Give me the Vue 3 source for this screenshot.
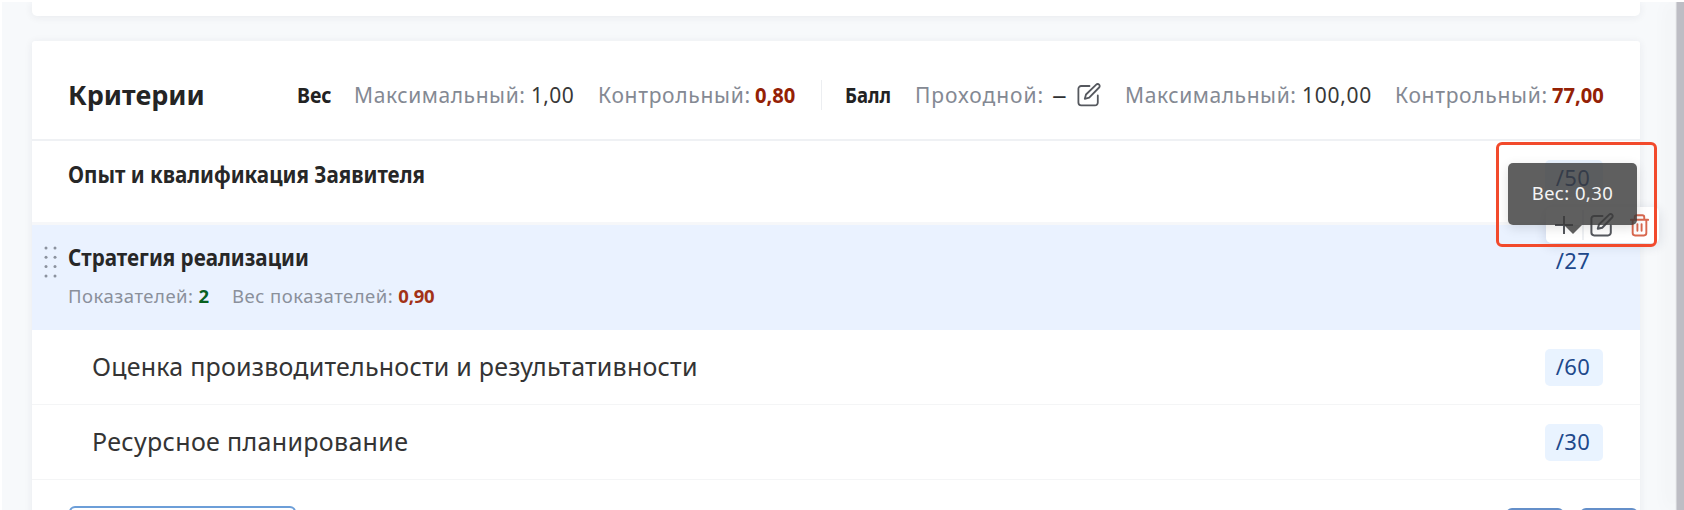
<script setup>
const items = [
  { title: 'Оценка производительности и результативности', score: '/60', cls: 'long' },
  { title: 'Ресурсное планирование', score: '/30', cls: 'short' },
]
</script>

<template>
  <div class="page">
    <main class="content">
      <section class="card previous"></section>
      <section class="card criteria">
        <header class="head">
          <h1>Критерии</h1>
          <b class="group weight">Вес</b>
          <span class="stat"><span class="label max">Максимальный:</span><span class="num">1,00</span></span>
          <span class="stat"><span class="label control">Контрольный:</span><b class="bad">0,80</b></span>
          <i class="divider"></i>
          <b class="group score-title">Балл</b>
          <span class="stat">
            <span class="label pass">Проходной:</span><i class="dash">–</i>
            <svg class="edit" viewBox="0 0 24 24"><path d="M12.500 3H4.200A2.800 2.800 0 0 0 1.400 5.800V19.600a2.800 2.800 0 0 0 2.800 2.800H18a2.800 2.800 0 0 0 2.800-2.800V12.500M9 11.500 19.200 1.600a2 2 0 0 1 2.900 2.900L12.200 14.700l-4.400 1.100z" /></svg>
          </span>
          <span class="stat"><span class="label max">Максимальный:</span><span class="num hundred">100,00</span></span>
          <span class="stat"><span class="label control">Контрольный:</span><b class="bad">77,00</b></span>
        </header>

        <div class="row first">
          <h2>Опыт и квалификация Заявителя</h2>
          <span class="pill">/50</span>
        </div>

        <div class="row selected">
          <svg class="grip" viewBox="0 0 13 33">
            <template v-for="y in 4" :key="y">
              <circle cx="2" :cy="y * 9.300 - 7.300" r="1.500" />
              <circle cx="11" :cy="y * 9.300 - 7.300" r="1.500" />
            </template>
          </svg>
          <div class="body">
            <h2>Стратегия реализации</h2>
            <p class="meta">
              <span>Показателей:</span><b class="good">2</b>
              <span class="next">Вес показателей:</span><b class="warn">0,90</b>
            </p>
          </div>
          <span class="pill">/27</span>
        </div>

        <div v-for="item in items" :key="item.title" class="row item">
          <h3 :class="item.cls">{{ item.title }}</h3>
          <span class="pill">{{ item.score }}</span>
        </div>

        <footer class="foot">
          <i class="btn wide"></i>
          <i class="btn small"></i>
          <i class="btn small"></i>
        </footer>
      </section>
    </main>
    <div class="scrollbar"></div>

    <div class="tools">
      <svg class="plus" viewBox="0 0 18 18"><path d="M9 0v18M0 9h18" /></svg>
      <i></i>
      <svg class="edit" viewBox="0 0 24 24"><path d="M12.500 3H4.200A2.800 2.800 0 0 0 1.400 5.800V19.600a2.800 2.800 0 0 0 2.800 2.800H18a2.800 2.800 0 0 0 2.800-2.800V12.500M9 11.500 19.200 1.600a2 2 0 0 1 2.900 2.900L12.200 14.700l-4.400 1.100z" /></svg>
      <svg class="trash" viewBox="0 0 20 24"><path d="M.8 6h18.400M5 6V3.200C5 2 5.800 1.200 7 1.200h6c1.200 0 2 .8 2 2V6M2.800 6v14c0 1.500 1 2.500 2.500 2.500h9.400c1.500 0 2.500-1 2.500-2.500V6M7.800 10.500v7M12.200 10.500v7" /></svg>
    </div>
    <div class="tooltip">Вес: 0,30</div>
    <div class="frame"></div>
  </div>
</template>

<style>
html, body { overflow: hidden; }
</style>

<style scoped>
* { box-sizing: border-box; }
.page {
  position: relative;
  display: flex;
  width: 1684px;
  height: 510px;
  overflow: hidden;
  background: #f7f9fb;
  border-top: 2px solid #fff;
  border-left: 2px solid #fff;
  font-family: "Noto Sans", "Open Sans", sans-serif;
  color: #303133;
}
h1, h2, h3, p { margin: 0; }
i { font-style: normal; }
.content { width: 1638px; height: 510px; flex: none; padding-left: 30px; margin-right: 37px; }
.card { width: 1608px; background: #fff; box-shadow: 0 1px 8px rgba(35, 45, 65, .075); }
.previous { height: 14px; border-radius: 0 0 5px 5px; }
.criteria { height: 500px; margin-top: 25px; border-radius: 3px; }
.scrollbar { width: 7px; flex: none; background: #bdbdc4; box-shadow: -8px 0 18px rgba(40, 45, 55, .05), -1px 0 1px #d5d6da; }

.head {
  height: 100px;
  padding: 9px 0 0 36px;
  display: grid;
  grid-template-columns: 229px 57px 244px 223px 24px 70px 210px 270px 1fr;
  align-items: center;
  border-bottom: 2px solid #eff1f4;
  font-size: 21px;
  line-height: 28px;
  white-space: nowrap;
}
.head h1 { font-size: 27px; line-height: 36px; color: #242424; font-weight: 700; letter-spacing: 0; }
.group { color: #222; justify-self: start; transform-origin: left; }
.weight { transform: scaleX(.93); }
.score-title { transform: scaleX(.88); }
.stat { display: flex; align-items: center; }
.label { color: #848993; flex: none; }
.max { width: 177px; letter-spacing: .58px; }
.control { width: 157px; letter-spacing: .7px; }
.pass { width: 137px; letter-spacing: .95px; }
.num { letter-spacing: .35px; color: #383838; }
.hundred { letter-spacing: .7px; }
.bad { color: #942105; transform: scaleX(.96); transform-origin: left; }
.divider { width: 1px; height: 30px; background: #eceef1; }
.dash { width: 25px; transform-origin: left; transform: scaleX(1.400); }
svg { fill: none; stroke: #55585e; stroke-width: 1.800; stroke-linecap: round; stroke-linejoin: round; flex: none; }
.edit { width: 24px; height: 24px; }

.row { display: flex; align-items: flex-start; justify-content: space-between; padding-right: 37px; }
h2 { width: max-content; font-size: 23px; line-height: 30px; font-weight: 700; color: #272727; white-space: nowrap; transform: scaleX(.896); transform-origin: left; }
.first { height: 84px; padding-top: 19px; padding-left: 36px; border-bottom: 3px solid #f6f7f9; }
.first h2 { margin-top: -1px; }
.pill {
  width: 58px;
  height: 37px;
  flex: none;
  border-radius: 5px;
  background: #e9f3ff;
  color: #20488b;
  font-size: 22px;
  line-height: 35px;
  letter-spacing: .4px;
  text-align: center;
  padding-right: 2px;
}
.selected { height: 105px; padding-top: 17px; background: #eaf2ff; }
.selected .pill { margin-top: 1px; background: none; }
.grip { width: 13px; height: 33px; margin: 4px 11px 0 12px; stroke: none; fill: #8b929e; }
.body { flex: 1; }
.meta { display: flex; margin-top: 11px; font-size: 18.500px; line-height: 26px; color: #8a909b; letter-spacing: .5px; white-space: nowrap; }
.meta b { margin-left: 5px; letter-spacing: -.2px; }
.meta .next { margin-left: 23px; }
.good { color: #08611f; }
.warn { color: #a23218; }
.item { height: 75px; padding-top: 19px; padding-left: 60px; border-bottom: 1px solid #f4f5f6; }
.item + .item { padding-top: 19px; }
h3 { font-size: 25px; line-height: 34px; font-weight: 400; white-space: nowrap; color: #343434; }
.long { letter-spacing: .22px; }
.short { letter-spacing: .33px; }
.foot { display: flex; align-items: flex-start; padding: 26px 2px 0 37px; }
.btn { flex: none; border: 2px solid #6c9ed8; border-radius: 6px; height: 50px; }
.wide { width: 227px; margin-right: auto; }
.small { width: 58px; margin: 2px 0 0 16px; border-color: #648fc9; }

.tools {
  position: absolute;
  left: 1544px;
  top: 205px;
  width: 113px;
  height: 36px;
  display: flex;
  align-items: center;
  padding-left: 9px;
  background: #fff;
  border-radius: 5px;
  box-shadow: 0 3px 12px rgba(30, 45, 70, .14);
}
.tools i { width: 2px; height: 30px; background: #eef0f3; margin: 0 6px 0 9px; }
.tools svg { stroke-width: 2; }
.plus { width: 18px; height: 18px; }
.tools .trash { width: 19px; height: 23px; stroke: #d9684f; margin-left: 16px; }
.tooltip {
  position: absolute;
  left: 1506px;
  top: 161px;
  width: 129px;
  height: 62px;
  border-radius: 5px;
  background: rgba(58, 58, 58, .81);
  color: #f4f4f4;
  font-size: 18.500px;
  line-height: 60px;
  letter-spacing: .4px;
  text-align: center;
  box-shadow: 0 3px 12px rgba(0, 0, 0, .12);
}
.tooltip::after {
  content: "";
  position: absolute;
  left: 56px;
  top: 62px;
  border: 9px solid transparent;
  border-top-color: rgba(58, 58, 58, .81);
  border-bottom: 0;
}
.frame {
  position: absolute;
  left: 1494px;
  top: 140px;
  width: 161px;
  height: 105px;
  border: 3px solid #f24a2c;
  border-radius: 6px;
}
</style>
